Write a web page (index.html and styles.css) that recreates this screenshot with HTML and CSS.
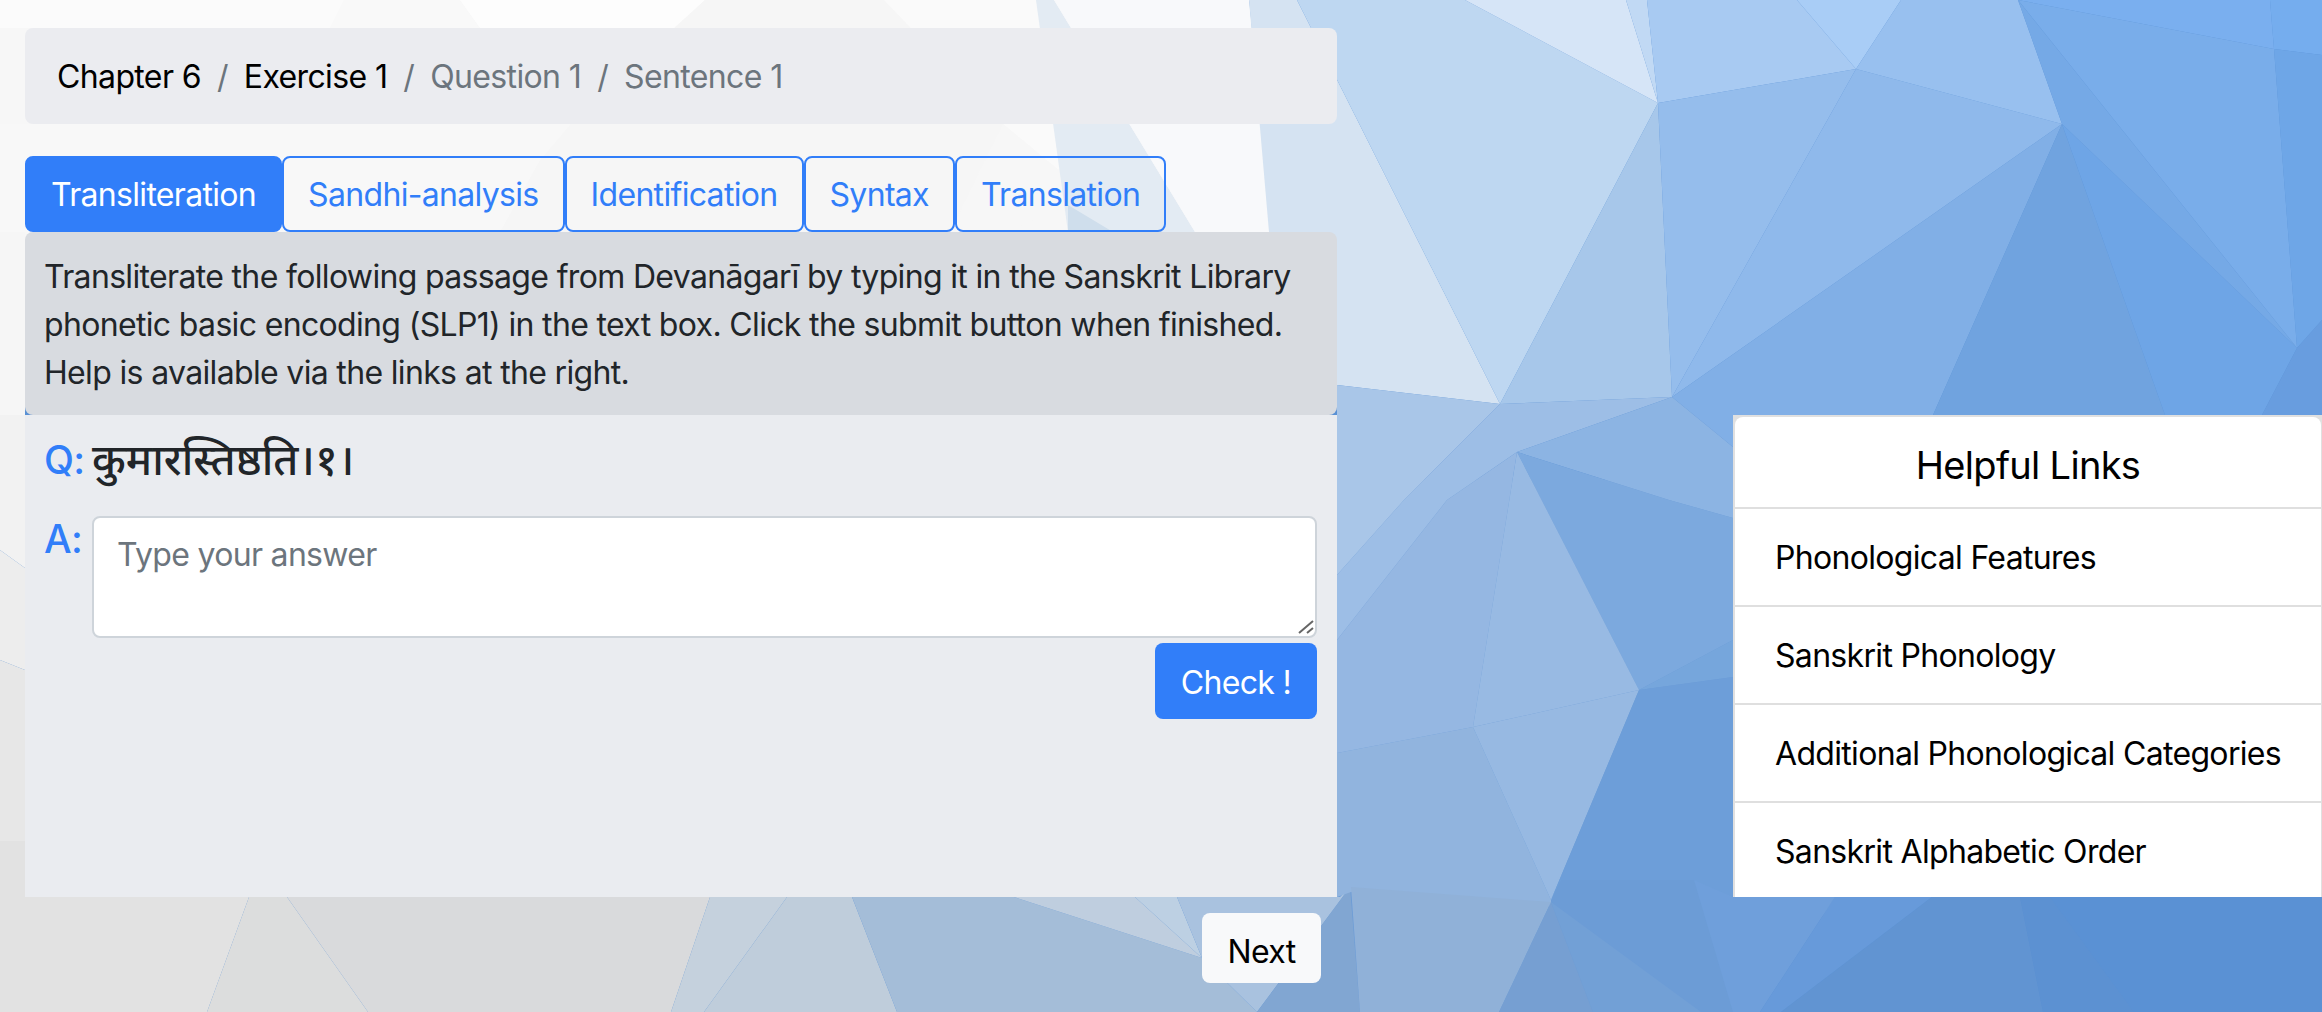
FILE: index.html
```html
<!DOCTYPE html>
<html lang="en">
<head>
<meta charset="utf-8">
<title>Transliteration</title>
<link rel="stylesheet" href="styles.css">
</head>
<body>
<svg class="bg" viewBox="0 0 2322 1012" preserveAspectRatio="none" aria-hidden="true">
<rect width="2322" height="1012" fill="#5a91d4"/>
<polygon fill="#6c9cd6" points="1330,480 1840,480 1840,897 1733,1012 1330,1012"/>
<polygon fill="#f7f7f7" points="0,0 1249,0 1290,400 0,400"/>
<polygon fill="#fbfbfb" points="0,0 344,0 330,28 0,28"/>
<polygon fill="#f9f9f9" points="344,0 460,0 480,28 330,28"/>
<polygon fill="#fdfdfd" points="460,0 705,0 674,28 480,28"/>
<polygon fill="#f8f8f8" points="0,124 571,124 500,232 0,232"/>
<polygon fill="#f6f6f6" points="705,0 884,0 1003,124 1067,177 1068,205 1007,232 500,232 540,160 571,124"/>
<polygon fill="#fafafa" points="884,0 1036,0 1067,177 1003,124"/>
<polygon fill="#f7f7f7" points="1003,124 1067,177 1068,205 1007,232 950,232"/>
<polygon fill="#e3ebf3" points="1036,0 1054,0 1195,232 1068,232"/>
<polygon fill="#cfdeec" points="1068,205 1113,232 1068,232"/>
<polygon fill="#f8f9fb" points="1054,0 1249,0 1269,232 1195,232"/>
<polygon fill="#f6f6f6" points="0,232 25,232 25,415 0,415"/>
<polygon fill="#f2f2f2" points="0,415 25,415 25,568 0,550"/>
<polygon fill="#ededed" points="0,550 25,568 25,670 0,660"/>
<polygon fill="#e7e7e7" points="0,660 25,670 25,841 0,841"/>
<polygon fill="#e2e2e2" points="0,841 25,841 25,897 249,897 207,1012 0,1012"/>
<polygon fill="#dcdddd" points="249,897 287,897 368,1012 207,1012"/>
<polygon fill="#d9dadc" points="287,897 710,897 671,1012 368,1012"/>
<polygon fill="#c5d1dd" points="710,897 787,897 704,1012 671,1012"/>
<polygon fill="#bfcddb" points="787,897 852,897 897,1012 704,1012"/>
<polygon fill="#a4bdd8" points="852,897 1014,897 1202,958 1257,1012 897,1012"/>
<polygon fill="#bfcedf" points="1014,897 1135,897 1202,958"/>
<polygon fill="#bdd0e3" points="1135,897 1177,897 1202,958"/>
<polygon fill="#a9c2df" points="1177,897 1340,897 1350,887 1322,925 1257,1012 1202,958"/>
<polygon fill="#81a6d2" points="1350,887 1360,1012 1257,1012"/>
<polygon fill="#91b4de" points="1337,753 1473,727 1551,900 1551,906 1351,892 1337,897"/>
<polygon fill="#90b1d8" points="1351,887 1551,902 1499,1012 1360,1012"/>
<polygon fill="#769fd2" points="1551,902 1593,1012 1499,1012"/>
<polygon fill="#72a0d6" points="1551,902 1701,1012 1593,1012"/>
<polygon fill="#6f9fdb" points="1694,880 1733,880 1835,897 1760,1012 1733,1012"/>
<polygon fill="#679ada" points="1835,897 1932,897 1781,1012 1760,1012"/>
<polygon fill="#6194d2" points="1932,897 2020,897 2043,1012 1781,1012"/>
<polygon fill="#5c91d2" points="2020,897 2050,897 2134,1012 2043,1012"/>
<polygon fill="#d5e3f2" points="1249,0 1297,0 1500,404 1337,385 1269,232"/>
<polygon fill="#bed7f1" points="1297,0 1465,0 1658,103 1500,404"/>
<polygon fill="#d6e5f7" points="1465,0 1626,0 1658,103"/>
<polygon fill="#c1d9f4" points="1626,0 1647,0 1658,103"/>
<polygon fill="#a8caf2" points="1647,0 1797,0 1856,69 1658,103"/>
<polygon fill="#a9cdf6" points="1797,0 1901,0 1856,69"/>
<polygon fill="#a7c7ea" points="1658,103 1672,397 1500,404"/>
<polygon fill="#95bdec" points="1658,103 1856,69 1672,397"/>
<polygon fill="#8fb9eb" points="1856,69 2062,124 1672,397"/>
<polygon fill="#98c0ef" points="1901,0 2018,0 2062,124 1856,69"/>
<polygon fill="#81afe6" points="2062,124 1933,415 1933,520 1733,520 1733,447 1672,397"/>
<polygon fill="#70a3df" points="2062,124 2165,415 1933,415"/>
<polygon fill="#6ea5e6" points="2062,124 2297,348 2262,415 2165,415"/>
<polygon fill="#7aafef" points="2018,0 2270,0 2274,49"/>
<polygon fill="#75adee" points="2270,0 2322,0 2322,55 2274,49"/>
<polygon fill="#79adea" points="2018,0 2274,49 2297,348"/>
<polygon fill="#75a9e6" points="2018,0 2297,348 2062,124"/>
<polygon fill="#6ea6e7" points="2274,49 2322,55 2322,320 2297,348"/>
<polygon fill="#689ddf" points="2297,348 2322,320 2322,520 2262,415"/>
<polygon fill="#a9c6e8" points="1337,385 1500,404 1404,500 1337,575"/>
<polygon fill="#9dbee6" points="1500,404 1672,397 1517,452 1447,500 1337,640 1337,575 1404,500"/>
<polygon fill="#8cb4e3" points="1672,397 1733,447 1733,518 1669,500 1517,452"/>
<polygon fill="#7ca9de" points="1517,452 1669,500 1733,518 1733,640 1639,690"/>
<polygon fill="#95b7e2" points="1517,452 1473,727 1337,753 1337,640 1447,500"/>
<polygon fill="#98bae3" points="1517,452 1639,690 1473,727"/>
<polygon fill="#97b9e2" points="1473,727 1639,690 1551,900"/>
<polygon fill="#76a6dc" points="1639,690 1733,640 1733,677"/>
<polygon fill="#6d9ed9" points="1639,690 1733,677 1733,897 1694,880 1561,880 1551,900"/>
</svg>

<main class="page">
  <section class="left">
    <nav class="crumbs">
      <a class="crumb">Chapter 6</a>
      <span class="sep">/</span>
      <a class="crumb">Exercise 1</a>
      <span class="sep">/</span>
      <span class="crumb muted">Question 1</span>
      <span class="sep">/</span>
      <span class="crumb muted">Sentence 1</span>
    </nav>

    <div class="tabs">
      <a class="tab active">Transliteration</a>
      <a class="tab">Sandhi-analysis</a>
      <a class="tab">Identification</a>
      <a class="tab">Syntax</a>
      <a class="tab">Translation</a>
    </div>

    <p class="instructions">Transliterate the following passage from Devanāgarī by typing it in the Sanskrit Library phonetic basic encoding (SLP1) in the text box. Click the submit button when finished. Help is available via the links at the right.</p>

    <div class="panel">
      <div class="qa question">
        <span class="label">Q:</span>
        <span class="sentence" lang="sa">कुमारस्तिष्ठति।१।</span>
      </div>
      <div class="qa answer">
        <label class="label" for="answer">A:</label>
        <div class="answer-wrap">
          <textarea id="answer" class="answer-box" placeholder="Type your answer"></textarea>
          <svg class="grip" viewBox="0 0 18 18" aria-hidden="true">
            <path d="M3 16 17 4M11 16 17 11"/>
          </svg>
        </div>
      </div>
      <div class="actions">
        <button class="btn-check" type="button">Check !</button>
      </div>
    </div>

    <div class="nav-row">
      <button class="btn-next" type="button">Next</button>
    </div>
  </section>

  <aside class="links">
    <div class="links-inner">
      <h2 class="links-title">Helpful Links</h2>
      <ul class="links-list">
        <li><a>Phonological Features</a></li>
        <li><a>Sanskrit Phonology</a></li>
        <li><a>Additional Phonological Categories</a></li>
        <li><a>Sanskrit Alphabetic Order</a></li>
      </ul>
    </div>
  </aside>
</main>
</body>
</html>
```

FILE: styles.css
```css
* { box-sizing: border-box; }
html, body { margin: 0; height: 1012px; overflow: hidden; }
body {
  position: relative;
  font-family: Inter, "Noto Sans Devanagari", "Noto Sans", sans-serif;
  font-size: 32px;
  line-height: 48px;
  color: #212529;
  letter-spacing: -0.68px;
}
.bg { position: absolute; left: 0; top: 0; width: 2322px; height: 1012px; z-index: -1; display: block; }
.page { display: flex; justify-content: space-between; align-items: flex-start; padding: 28px 0 0 25px; }
.left { width: 1312px; }

.crumbs {
  display: flex; gap: 16px; height: 96px; padding: 25px 32px 23px; margin-bottom: 32px;
  background: #ebecf0; border-radius: 8px; color: #000; letter-spacing: -0.63px;
}
.sep, .muted { color: #6c757d; }

.tabs { display: flex; height: 76px; }
.tab {
  padding: 13px 24px 11px; border: 2px solid #317ef9; border-radius: 8px; color: #317ef9; white-space: nowrap;
}
.tab.active { background: #317ef9; color: #fff; }

.instructions {
  margin: 0; padding: 21px 20px 18px 19px; height: 183px;
  background: #d8dbe0; border-radius: 8px; letter-spacing: -0.66px;
}

.panel { height: 482px; padding: 0 20px 0 19px; background: #eaecf0; }
.qa { display: flex; }
.question { height: 101px; padding-top: 20px; align-items: flex-start; }
.label { flex: none; width: 48px; font-size: 39px; font-weight: 500; color: #317ef9; line-height: 50px; }
.sentence { font-size: 43px; font-weight: 500; line-height: 50px; letter-spacing: 0; margin-top: -1px; }
.answer .label { margin-top: -2px; }
.answer-wrap { position: relative; width: 1225px; height: 122px; }
.answer-box {
  display: block; width: 100%; height: 100%; padding: 13px 23px 11px;
  font: inherit; letter-spacing: inherit; color: #495057; background: #fff;
  border: 2px solid #ced4da; border-radius: 8px; resize: none;
}
.answer-box::placeholder { color: #6c757d; opacity: 1; }
.grip { position: absolute; right: 3px; bottom: 3px; width: 18px; height: 18px; pointer-events: none; }
.grip path { fill: none; stroke: #666; stroke-width: 2; }
.actions { display: flex; justify-content: flex-end; margin-top: 5px; }
.btn-check {
  height: 76px; padding: 3px 26px 0; border: 0; border-radius: 8px;
  background: #317ef9; color: #fff; font: inherit; letter-spacing: inherit;
}

.nav-row { display: flex; justify-content: flex-end; margin-top: 16px; padding-right: 16px; }
.btn-next {
  height: 70px; padding: 8px 25.5px 0; border: 0; border-radius: 8px;
  background: #f8f9fa; color: #000; font: inherit; letter-spacing: inherit;
}

.links {
  width: 589px; height: 482px; margin-top: 387px; padding: 2px 1px 0 2px;
  background: #e0e0e0; overflow: hidden;
}
.links-inner { height: 100%; background: #fff; border-radius: 8px 8px 0 0; color: #000; overflow: hidden; }
.links-title { margin: 0; height: 90px; padding-top: 24px; text-align: center; font-size: 38px; font-weight: 400; line-height: 48px; }
.links-list { margin: 0; padding: 0; list-style: none; }
.links-list li { border-top: 2px solid #dfdfdf; padding: 25px 40px 23px; height: 98px; white-space: nowrap; }
```
